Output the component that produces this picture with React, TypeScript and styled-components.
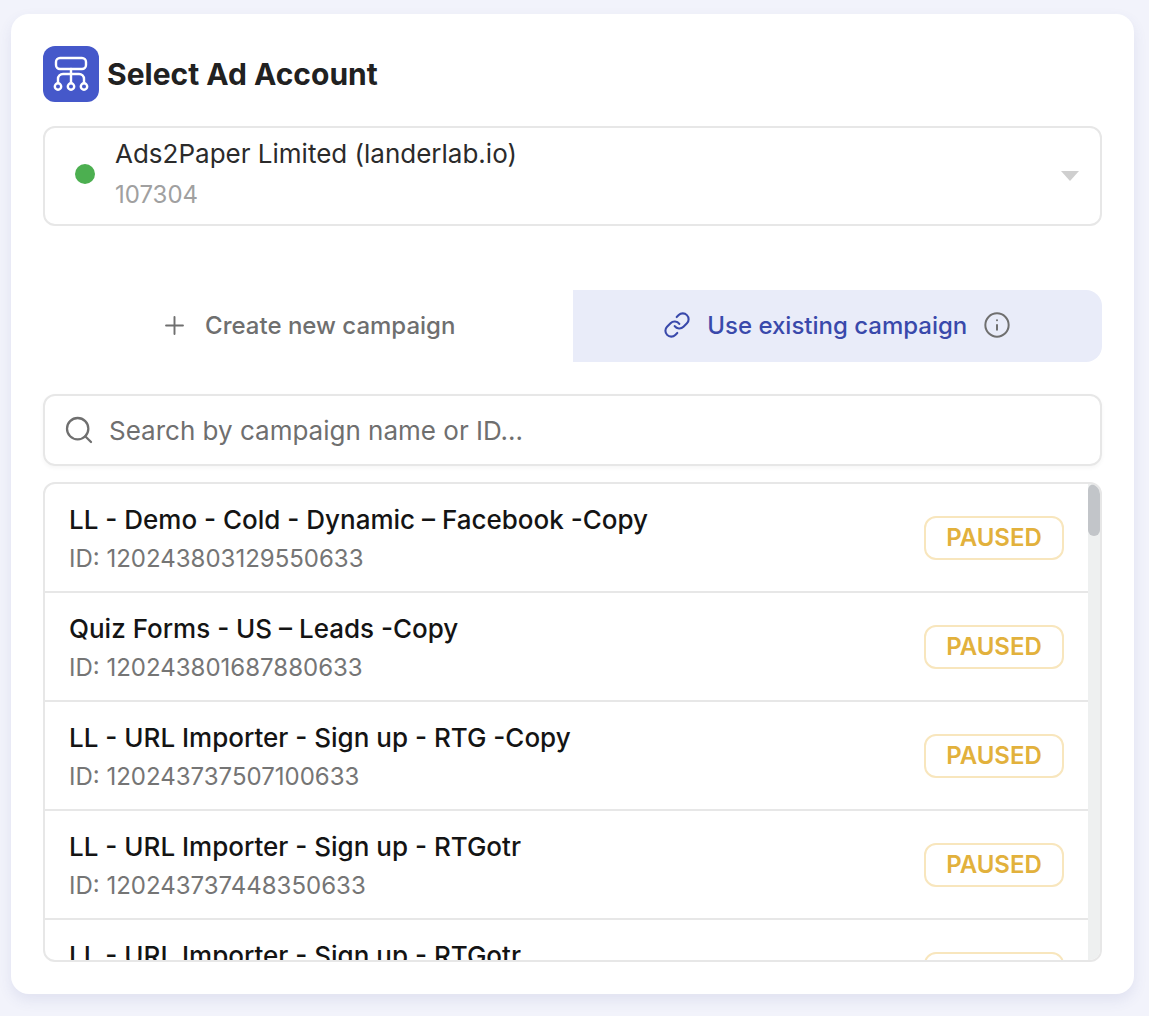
import React from 'react';
import styled, { createGlobalStyle } from 'styled-components';
import { Info, Link, Plus, Search } from 'lucide-react';

const campaigns = [
  { name: 'LL - Demo - Cold - Dynamic – Facebook -Copy', id: '120243803129550633' },
  { name: 'Quiz Forms - US – Leads -Copy', id: '120243801687880633' },
  { name: 'LL - URL Importer - Sign up - RTG -Copy', id: '120243737507100633' },
  { name: 'LL - URL Importer - Sign up - RTGotr', id: '120243737448350633' },
  { name: 'LL - URL Importer - Sign up - RTGotr', id: '120243737448350634' },
];

const AccountIcon = () => (
  <svg width="56" height="56" viewBox="0 0 56 56" fill="none" stroke="#fff" strokeWidth="2.4" strokeLinecap="round">
    <rect x="13" y="12" width="30" height="11" rx="4" />
    <path d="M28 23v14" />
    <path d="M15 37v-4a5 5 0 0 1 5-5h16a5 5 0 0 1 5 5v4" />
    <circle cx="15" cy="40.5" r="3.2" />
    <circle cx="28" cy="40.5" r="3.2" />
    <circle cx="41" cy="40.5" r="3.2" />
  </svg>
);

const App = () => {
  return (
    <>
      <GlobalStyle />
      <Card>
        <Header>
          <IconBadge>
            <AccountIcon />
          </IconBadge>
          <Title>Select Ad Account</Title>
        </Header>

        <AccountSelect>
          <StatusDot />
          <AccountText>
            <AccountName>Ads2Paper Limited (landerlab.io)</AccountName>
            <AccountId>107304</AccountId>
          </AccountText>
          <Caret />
        </AccountSelect>

        <Tabs>
          <Tab>
            <Plus size={29} strokeWidth={1.6} />
            <span>Create new campaign</span>
          </Tab>
          <Tab active>
            <Link size={28} strokeWidth={1.8} />
            <span>Use existing campaign</span>
            <InfoIcon size={28} strokeWidth={1.7} />
          </Tab>
        </Tabs>

        <SearchBox>
          <Search size={32} strokeWidth={1.7} color="#6f6f6f" />
          <SearchInput placeholder="Search by campaign name or ID..." readOnly />
        </SearchBox>

        <ListFrame>
          <CampaignList>
            {campaigns.map((campaign) => (
              <CampaignRow key={campaign.id}>
                <RowText>
                  <CampaignName>{campaign.name}</CampaignName>
                  <CampaignId>ID: {campaign.id}</CampaignId>
                </RowText>
                <StatusBadge>PAUSED</StatusBadge>
              </CampaignRow>
            ))}
          </CampaignList>
          <ScrollTrack>
            <ScrollThumb />
          </ScrollTrack>
        </ListFrame>
      </Card>
    </>
  );
};

const GlobalStyle = createGlobalStyle`
  * {
    box-sizing: border-box;
  }

  body {
    margin: 0;
    background: #f2f3fb;
    font-family: Inter, "Liberation Sans", sans-serif;
  }
`;

const Card = styled.div`
  width: 1123px;
  height: 980px;
  margin: 14px 0 22px 11px;
  padding: 32px;
  background: #fff;
  border-radius: 18px;
  box-shadow: 0 6px 14px rgba(70, 80, 150, 0.1);
  display: flex;
  flex-direction: column;
`;

const Header = styled.div`
  display: flex;
  align-items: center;
  gap: 8px;
  margin-bottom: 24px;
`;

const IconBadge = styled.div`
  width: 56px;
  height: 56px;
  border-radius: 12px;
  background: #4558ca;
  display: flex;
`;

const Title = styled.div`
  font-size: 30px;
  font-weight: 700;
  color: #212121;
`;

const AccountSelect = styled.div`
  height: 100px;
  border: 2px solid #e7e7e7;
  border-radius: 12px;
  padding: 0 21px 4px 30px;
  display: flex;
  align-items: center;
  margin-bottom: 64px;
`;

const StatusDot = styled.div`
  width: 20px;
  height: 20px;
  border-radius: 50%;
  background: #4caf50;
  margin-right: 20px;
`;

const AccountText = styled.div`
  flex: 1;
  padding-top: 1px;
`;

const AccountName = styled.div`
  font-size: 26px;
  line-height: 36px;
  color: #2b2b2b;
`;

const AccountId = styled.div`
  font-size: 24px;
  line-height: 36px;
  margin-top: 5px;
  color: #a0a0a0;
`;

const Caret = styled.div`
  width: 0;
  height: 0;
  margin-top: 4px;
  border-left: 9px solid transparent;
  border-right: 9px solid transparent;
  border-top: 10px solid #cfcfcf;
`;

const Tabs = styled.div`
  display: grid;
  grid-template-columns: 1fr 1fr;
  height: 72px;
  margin-bottom: 32px;
`;

const Tab = styled.div<{ active?: boolean }>`
  display: flex;
  align-items: center;
  justify-content: center;
  gap: 16px;
  padding-bottom: 2px;
  font-size: 24px;
  font-weight: 500;
  color: ${({ active }) => (active ? '#3949ab' : '#6f6f6f')};
  background: ${({ active }) => (active ? '#e9ecf9' : 'transparent')};
  border-radius: ${({ active }) => (active ? '0 16px 16px 0' : '16px 0 0 16px')};
`;

const InfoIcon = styled(Info)`
  color: #6f6f6f;
`;

const SearchBox = styled.div`
  height: 72px;
  border: 2px solid #e7e7e7;
  border-radius: 12px;
  padding: 0 18px;
  display: flex;
  align-items: center;
  gap: 14px;
  margin-bottom: 16px;
  box-shadow: 0 2px 4px rgba(0, 0, 0, 0.04);
`;

const SearchInput = styled.input`
  flex: 1;
  border: 0;
  outline: 0;
  padding: 0;
  background: transparent;
  font-family: inherit;
  font-size: 26px;
  color: #6f6f6f;

  &::placeholder {
    color: #6f6f6f;
    opacity: 1;
  }
`;

const ListFrame = styled.div`
  height: 480px;
  border: 2px solid #e7e7e7;
  border-radius: 12px;
  overflow: hidden;
  display: flex;
`;

const CampaignList = styled.div`
  flex: 1;
  min-width: 0;
  overflow: hidden;
`;

const ScrollTrack = styled.div`
  width: 12px;
  background: #eef0f0;
`;

const ScrollThumb = styled.div`
  height: 52px;
  background: #c2c5c9;
  border-radius: 6px;
`;

const CampaignRow = styled.div`
  height: 109px;
  padding: 0 24px;
  border-bottom: 2px solid #e7e7e7;
  display: flex;
  align-items: center;
  justify-content: space-between;
`;

const RowText = styled.div`
  padding-top: 3px;
`;

const CampaignName = styled.div`
  font-size: 26px;
  font-weight: 500;
  line-height: 36px;
  color: #141414;
`;

const CampaignId = styled.div`
  font-size: 24px;
  line-height: 34px;
  margin-top: 4px;
  color: #757575;
`;

const StatusBadge = styled.div`
  width: 140px;
  height: 44px;
  border: 2px solid #f8e6bd;
  border-radius: 12px;
  display: flex;
  align-items: center;
  justify-content: center;
  font-size: 24px;
  font-weight: 600;
  color: #e2b13c;
`;

export default App;
